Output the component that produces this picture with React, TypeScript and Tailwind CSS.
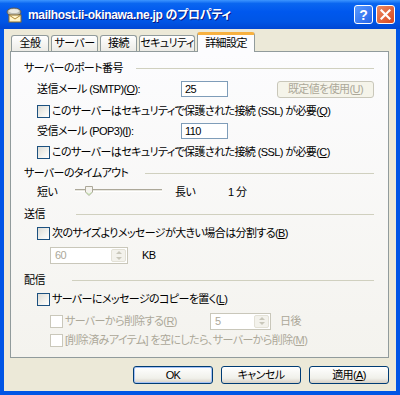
import React from 'react';

const Check = ({ disabled = false }: { disabled?: boolean }) => (
    <span
        className={
            disabled
                ? 'box-border inline-block h-[13px] w-[13px] shrink-0 border border-[#CAC8BB] bg-white'
                : 'box-border inline-block h-[13px] w-[13px] shrink-0 border border-[#1C5180] bg-[linear-gradient(135deg,#DCDBD5_0%,#F3F3EF_60%,#FFFFFF_100%)]'
        }
    />
);

// group heading with etched line
const Group = ({ label, boxClass, className }: { label: string; boxClass: string; className: string }) => (
    <div className={`flex h-[14px] items-center pl-[13px] pr-[14px] ${className}`}>
        <span className={`shrink-0 whitespace-nowrap ${boxClass}`}>{label}</span>
        <div className="h-px flex-1 bg-[#D0D0BF]" />
    </div>
);

const Spin = ({ value, boxClass }: { value: string; boxClass: string }) => (
    <div className={`box-border flex h-[17px] items-stretch border border-[#C9C7BA] bg-white p-px ${boxClass}`}>
        <span className="flex-1 pl-[3px] leading-[13px] text-[#ACA899]">{value}</span>
        <div className="flex w-[15px] flex-col rounded-[2px] border border-[#E3E1D6] bg-[#F3F2EC]">
            <div className="flex flex-1 items-center justify-center">
                <span className="h-0 w-0 border-x-[3px] border-b-[3px] border-x-transparent border-b-[#C9C7BA]" />
            </div>
            <div className="flex flex-1 items-center justify-center">
                <span className="h-0 w-0 border-x-[3px] border-t-[3px] border-x-transparent border-t-[#C9C7BA]" />
            </div>
        </div>
    </div>
);

const tabs = [
    { label: '全般', w: 'w-[38px]' },
    { label: 'サーバー', w: 'w-[47px]' },
    { label: '接続', w: 'w-[37px]' },
    { label: 'セキュリティ', w: 'w-[56px]' },
];

const btn =
    'box-border flex h-[18px] w-[80px] items-center justify-center rounded-[3px] border border-[#003C74] bg-[linear-gradient(to_bottom,#FFFFFF,#F0F0EA_70%,#D6D0C5)] leading-none';

const App = () => {
    return (
        <div className="flex h-[395px] w-[400px] flex-col overflow-hidden bg-[#0055E5] font-['Liberation_Sans','Noto_Sans_CJK_JP',sans-serif] text-[11px] tracking-[-0.6px] text-black [font-feature-settings:'palt']">
            {/* Title bar */}
            <div className="flex h-[29px] shrink-0 items-center bg-[linear-gradient(to_bottom,#3D95FF_0%,#0A66F0_12%,#0058EE_40%,#0055E5_75%,#0047D4_100%)] pl-[6px] pr-[5px]">
                <svg width="17" height="16" viewBox="0 0 17 16" className="shrink-0">
                    <ellipse cx="8" cy="5" rx="7" ry="4" fill="#B8B8B0" stroke="#5A5A55" strokeWidth="1" />
                    <ellipse cx="8" cy="4" rx="5" ry="2" fill="#E8E8E2" />
                    <rect x="3" y="8" width="12" height="7" fill="#FFF3C8" stroke="#8A6D2A" strokeWidth="1" />
                    <path d="M3 8 L9 12 L15 8" fill="none" stroke="#B08A3A" strokeWidth="1" />
                </svg>
                <span className="ml-[5px] whitespace-nowrap text-[12px] font-bold tracking-[-0.3px] text-white [text-shadow:1px_1px_0_#0A1883]">
                    mailhost.ii-okinawa.ne.jp のプロパティ
                </span>
                <div className="ml-auto flex gap-[3px]">
                    <div className="flex h-[19px] w-[19px] items-center justify-center rounded-[3px] border border-white bg-[linear-gradient(135deg,#5A9BFF,#2563E8)] text-[14px] font-bold leading-none tracking-normal text-white">
                        ?
                    </div>
                    <div className="flex h-[19px] w-[19px] items-center justify-center rounded-[3px] border border-white bg-[linear-gradient(135deg,#EC8A64,#D8471E)]">
                        <svg width="11" height="11" viewBox="0 0 11 11">
                            <path d="M1.5 1.5 L9.5 9.5 M9.5 1.5 L1.5 9.5" stroke="white" strokeWidth="2.2" strokeLinecap="square" />
                        </svg>
                    </div>
                </div>
            </div>

            {/* Client area */}
            <div className="mx-[4px] mb-[4px] flex flex-1 flex-col bg-[#ECE9D8]">
                {/* Tabs */}
                <div className="ml-[7px] mt-[3px] flex h-[19px] items-end gap-[2px]">
                    {tabs.map((t) => (
                        <div
                            key={t.label}
                            className={`box-border flex h-[16px] items-center justify-center rounded-t-[3px] border border-b-0 border-[#919B9C] bg-[linear-gradient(to_bottom,#FFFFFF,#ECEBE6)] leading-none ${t.w}`}
                        >
                            {t.label}
                        </div>
                    ))}
                    <div className="relative z-10 -mb-px box-border flex h-[20px] w-[58px] items-center justify-center rounded-t-[3px] border-x border-[#919B9C] border-t-[3px] border-t-[#F7B140] bg-[#FCFCFE] leading-none">
                        詳細設定
                    </div>
                </div>

                {/* Tab panel */}
                <div className="ml-[6px] mr-[7px] box-border flex h-[307px] flex-col border border-[#919B9C] bg-[linear-gradient(to_bottom,#FCFCFE,#F4F3EE)]">
                    <Group label="サーバーのポート番号" boxClass="w-[112px]" className="mt-[9px]" />

                    <div className="mt-[5px] flex h-[18px] items-center pl-[26px] pr-[14px]">
                        <span className="w-[144px] shrink-0 whitespace-nowrap">
                            送信メール (SMTP)(<u>O</u>):
                        </span>
                        <div className="box-border h-[16px] w-[47px] border border-[#7F9DB9] bg-white pl-[3px] leading-[14px]">25</div>
                        <div className="ml-auto box-border flex h-[17px] w-[97px] items-center justify-center rounded-[3px] border border-[#C9C7BA] bg-[#F5F4EA] text-[#ACA899]">
                            既定値を使用(<u>U</u>)
                        </div>
                    </div>

                    <div className="mt-[6px] flex h-[14px] items-center gap-[2px] pl-[26px]">
                        <Check />
                        <span className="whitespace-nowrap">
                            このサーバーはセキュリティで保護された接続 (SSL) が必要(<u>Q</u>)
                        </span>
                    </div>

                    <div className="mt-[4px] flex h-[18px] items-center pl-[26px]">
                        <span className="w-[144px] shrink-0 whitespace-nowrap">
                            受信メール (POP3)(<u>I</u>):
                        </span>
                        <div className="box-border h-[16px] w-[47px] border border-[#7F9DB9] bg-white pl-[3px] leading-[14px]">110</div>
                    </div>

                    <div className="mt-[5px] flex h-[14px] items-center gap-[2px] pl-[26px]">
                        <Check />
                        <span className="whitespace-nowrap">
                            このサーバーはセキュリティで保護された接続 (SSL) が必要(<u>C</u>)
                        </span>
                    </div>

                    <Group label="サーバーのタイムアウト" boxClass="w-[121px]" className="mt-[7px]" />

                    <div className="mt-[4px] flex h-[16px] items-center pl-[26px]">
                        <span className="w-[38px] shrink-0">短い</span>
                        <div className="relative h-[16px] w-[87px]">
                            <div className="absolute left-0 right-0 top-[5px] h-[3px] border-y border-t-[#ACA899] border-b-white bg-[#E8E7E0]" />
                            <svg width="8" height="10" viewBox="0 0 8 10" className="absolute left-[10px] top-[2px]">
                                <path d="M0.5 0.5 H7.5 V6 L4 9.5 L0.5 6 Z" fill="#F4F3EE" stroke="#ACA899" strokeWidth="1" />
                                <path d="M1.5 6.5 L4 8.5 L6.5 6.5" fill="none" stroke="#B8DDA0" strokeWidth="1" />
                            </svg>
                        </div>
                        <span className="ml-[13px] w-[53px] shrink-0">長い</span>
                        <span>1 分</span>
                    </div>

                    <Group label="送信" boxClass="w-[52px]" className="mt-[7px]" />

                    <div className="mt-[5px] flex h-[14px] items-center gap-[2px] pl-[26px]">
                        <Check />
                        <span className="whitespace-nowrap">
                            次のサイズよりメッセージが大きい場合は分割する(<u>B</u>)
                        </span>
                    </div>

                    <div className="mt-[7px] flex h-[17px] items-center pl-[39px]">
                        <Spin value="60" boxClass="w-[78px]" />
                        <span className="ml-[14px]">KB</span>
                    </div>

                    <Group label="配信" boxClass="w-[48px]" className="mt-[9px]" />

                    <div className="mt-[5px] flex h-[14px] items-center gap-[2px] pl-[26px]">
                        <Check />
                        <span className="whitespace-nowrap">
                            サーバーにメッセージのコピーを置く(<u>L</u>)
                        </span>
                    </div>

                    <div className="mt-[6px] flex h-[18px] items-center pl-[39px]">
                        <div className="flex w-[160px] shrink-0 items-center gap-[2px]">
                            <Check disabled />
                            <span className="whitespace-nowrap text-[#ACA899]">
                                サーバーから削除する(<u>R</u>)
                            </span>
                        </div>
                        <Spin value="5" boxClass="w-[61px]" />
                        <span className="ml-[9px] text-[#ACA899]">日後</span>
                    </div>

                    <div className="mt-[3px] flex h-[14px] items-center gap-[2px] pl-[39px]">
                        <Check disabled />
                        <span className="whitespace-nowrap text-[#ACA899]">
                            [削除済みアイテム] を空にしたら、サーバーから削除(<u>M</u>)
                        </span>
                    </div>
                </div>

                {/* Buttons */}
                <div className="mr-[7px] mt-[8px] flex justify-end gap-[8px]">
                    <button className={`${btn} shadow-[inset_0_0_0_1px_#A6C2F5]`}>OK</button>
                    <button className={btn}>キャンセル</button>
                    <button className={btn}>
                        適用(<u>A</u>)
                    </button>
                </div>
            </div>
        </div>
    );
};

export default App;
